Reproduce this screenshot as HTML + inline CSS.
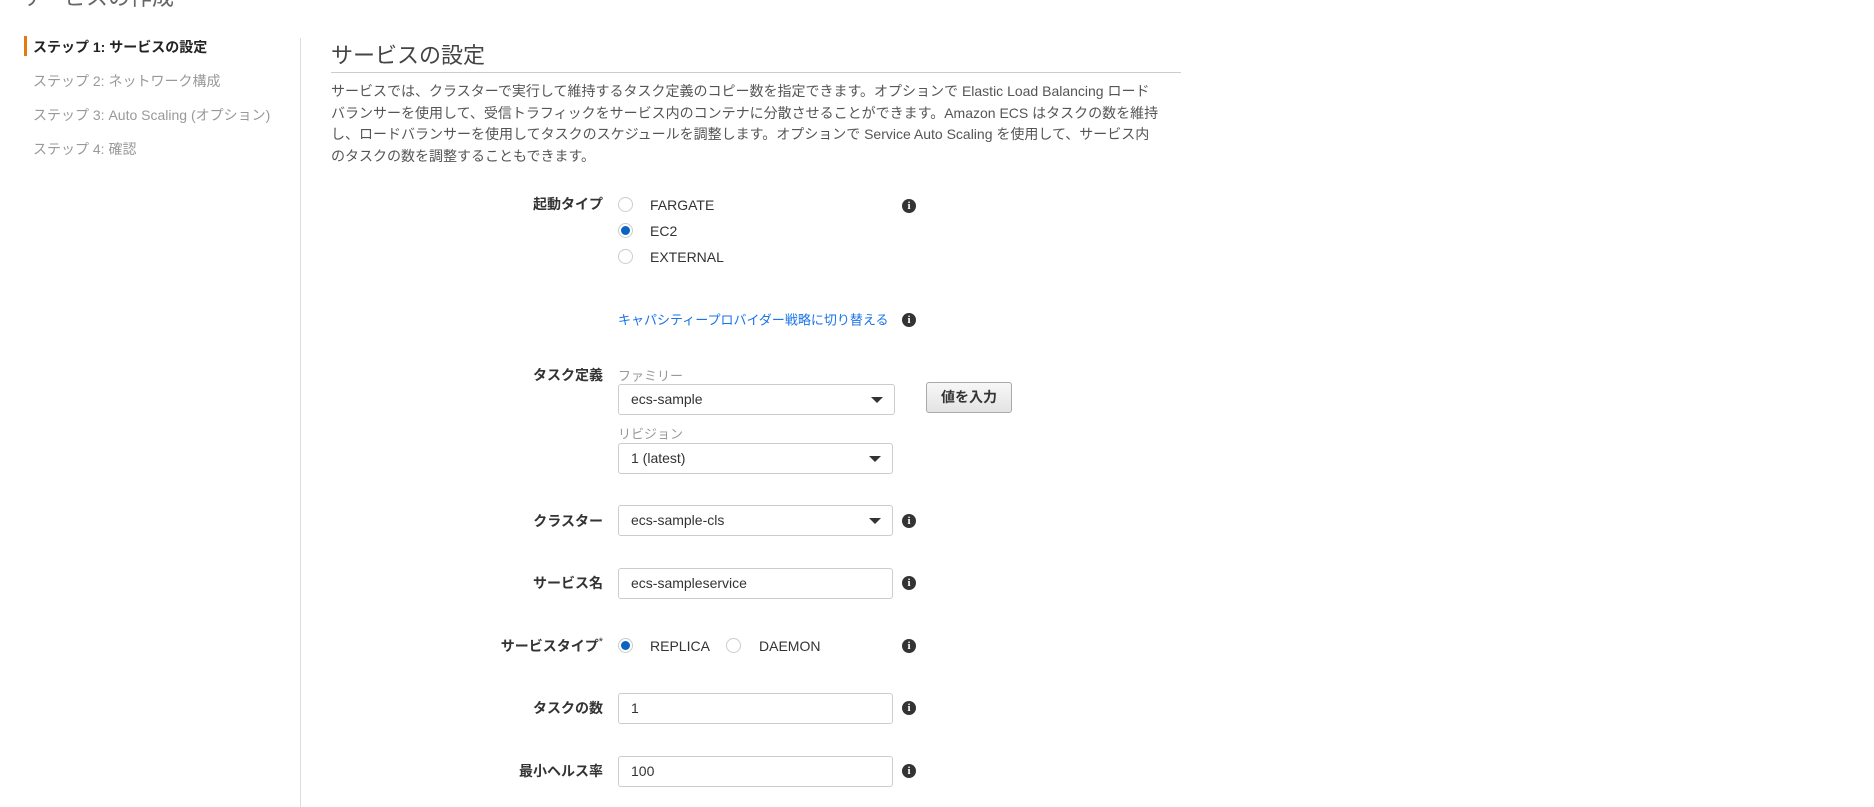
<!DOCTYPE html>
<html><head><meta charset="utf-8"><style>
*{box-sizing:border-box;margin:0;padding:0}
body{width:1874px;height:807px;overflow:hidden;background:#fff;font-family:"Liberation Sans","Noto Sans CJK JP",sans-serif;color:#444;position:relative}
.a{position:absolute;white-space:nowrap}
.step{font-size:14px;color:#999;left:33px}
.lbl{font-size:14px;font-weight:bold;color:#333;right:1271px;transform:translateY(-50%)}
.inp{position:absolute;left:618px;width:275px;height:31px;border:1px solid #ccc;border-radius:3px;font-size:14px;color:#333;padding-left:12px;line-height:29px}
.sel::after{content:"";position:absolute;right:11px;top:12px;border-left:6px solid transparent;border-right:6px solid transparent;border-top:6px solid #333}
.rad{position:absolute;width:15px;height:15px;border:1px solid #ccc;border-radius:50%;background:#fff}
.rad.on::after{content:"";position:absolute;left:2px;top:2px;width:9px;height:9px;border-radius:50%;background:#0b63c4}
.rt{font-size:14px;color:#333;transform:translateY(-50%)}
.info{position:absolute;left:902px;width:14px;height:14px;border-radius:50%;background:#333;color:#fff;font:bold 11px/14px "Liberation Serif",serif;text-align:center}
.sub{font-size:13px;color:#999;left:618px;transform:translateY(-50%)}
</style></head><body>
<div class="a" style="left:20px;top:-20px;font-size:22px;color:#666">サービスの作成</div>
<div class="a" style="left:24px;top:36px;width:3px;height:20px;background:#e47911"></div>
<div class="a step" style="top:37px;color:#222;font-weight:bold">ステップ 1: サービスの設定</div>
<div class="a step" style="top:71px">ステップ 2: ネットワーク構成</div>
<div class="a step" style="top:105px">ステップ 3: Auto Scaling (オプション)</div>
<div class="a step" style="top:139px">ステップ 4: 確認</div>
<div class="a" style="left:300px;top:38px;width:1px;height:769px;background:#ddd"></div>
<div class="a" style="left:331px;top:38px;font-size:22px;color:#444">サービスの設定</div>
<div class="a" style="left:331px;top:72px;width:850px;height:1px;background:#ccc"></div>
<div class="a" style="left:331px;top:81px;width:830px;font-size:14px;line-height:21.5px;color:#555;white-space:normal">サービスでは、クラスターで実行して維持するタスク定義のコピー数を指定できます。オプションで Elastic Load Balancing ロードバランサーを使用して、受信トラフィックをサービス内のコンテナに分散させることができます。Amazon ECS はタスクの数を維持し、ロードバランサーを使用してタスクのスケジュールを調整します。オプションで Service Auto Scaling を使用して、サービス内のタスクの数を調整することもできます。</div>

<div class="a lbl" style="top:204px">起動タイプ</div>
<div class="rad" style="left:618px;top:197px"></div><div class="a rt" style="left:650px;top:205px">FARGATE</div>
<div class="rad on" style="left:618px;top:223px"></div><div class="a rt" style="left:650px;top:231px">EC2</div>
<div class="rad" style="left:618px;top:249px"></div><div class="a rt" style="left:650px;top:257px">EXTERNAL</div>
<div class="info" style="top:199px">i</div>
<div class="a rt" style="left:618px;top:319px;color:#1a73e8;font-size:13px">キャパシティープロバイダー戦略に切り替える</div>
<div class="info" style="top:313px">i</div>

<div class="a lbl" style="top:375px">タスク定義</div>
<div class="a sub" style="top:375px">ファミリー</div>
<div class="inp sel" style="top:384px;width:277px">ecs-sample</div>
<div class="a" style="left:926px;top:382px;width:86px;height:31px;border:1px solid #aaa;border-radius:3px;background:linear-gradient(#f7f7f7,#e3e3e3);font-size:14px;font-weight:bold;color:#333;text-align:center;line-height:29px">値を入力</div>
<div class="a sub" style="top:433px">リビジョン</div>
<div class="inp sel" style="top:443px;width:275px">1 (latest)</div>

<div class="a lbl" style="top:521px">クラスター</div>
<div class="inp sel" style="top:505px">ecs-sample-cls</div>
<div class="info" style="top:514px">i</div>

<div class="a lbl" style="top:583px">サービス名</div>
<div class="inp" style="top:568px">ecs-sampleservice</div>
<div class="info" style="top:576px">i</div>

<div class="a lbl" style="top:646px">サービスタイプ<span style="font-weight:normal;font-size:11px;vertical-align:top">*</span></div>
<div class="rad on" style="left:618px;top:638px"></div><div class="a rt" style="left:650px;top:646px">REPLICA</div>
<div class="rad" style="left:726px;top:638px"></div><div class="a rt" style="left:759px;top:646px">DAEMON</div>
<div class="info" style="top:639px">i</div>

<div class="a lbl" style="top:708px">タスクの数</div>
<div class="inp" style="top:693px">1</div>
<div class="info" style="top:701px">i</div>

<div class="a lbl" style="top:771px">最小ヘルス率</div>
<div class="inp" style="top:756px">100</div>
<div class="info" style="top:764px">i</div>
</body></html>
